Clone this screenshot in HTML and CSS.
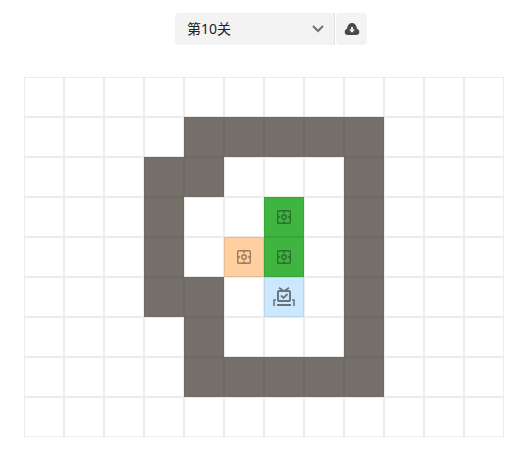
FILE: index.html
```html
<!DOCTYPE html>
<html lang="zh-CN">
<head>
<meta charset="utf-8">
<meta name="viewport" content="width=device-width, initial-scale=1">
<title>推箱子</title>
<link rel="stylesheet" href="styles.css">
</head>
<body>
<svg class="symbols" aria-hidden="true">
  <symbol id="box" viewBox="0 0 14 14">
    <g fill="none" stroke="currentColor" stroke-width="1.4">
      <rect x="0.7" y="0.7" width="12.6" height="12.6" rx="1"/>
      <circle cx="7" cy="7" r="2.2"/>
      <path d="M7 1v2.200M7 10.800V13M1 7h2.200M10.800 7H13"/>
    </g>
  </symbol>
  <symbol id="player" viewBox="0 0 22 20">
    <g fill="none" stroke="currentColor" stroke-width="2">
      <rect x="5" y="4" width="12" height="10" rx="1"/>
      <path d="M6 0.800 10 3.500M16 0.800 12 3.500M8 8.500l2.500 2.500L14.500 7" stroke-width="1.8"/>
      <path d="M3 13H1v6M19 13h2v6" stroke-width="1.600"/>
      <path d="M4 18h14"/>
    </g>
  </symbol>
</svg>
<main class="page">
  <div class="toolbar">
    <div class="picker">
      <select class="level" aria-label="关卡">
        <option>第10关</option>
      </select>
      <svg class="chevron" viewBox="0 0 12 8" aria-hidden="true"><path d="M1 1l5 5 5-5"/></svg>
    </div>
    <button class="download" type="button" aria-label="下载">
      <svg class="cloud" viewBox="0 0 16 12" aria-hidden="true">
        <path class="cloud-body" d="M4 12C1.700 12 .7 10.500 .7 8.900c0-1.600.9-2.800 2.400-3.200C3.300 2.500 5.200 0 8 0s4.700 2.500 4.900 5.700C14.400 6.100 15.300 7.300 15.300 8.900c0 1.600-1 3.100-3.300 3.100z"/>
        <path class="cloud-arrow" d="M7 4h2v2.500h2L8 9.700 5 6.500h2z"/>
      </svg>
    </button>
  </div>
  <div class="board" id="board"></div>
</main>
<script src="board.js"></script>
</body>
</html>
```
FILE: styles.css
```css
* {
  box-sizing: border-box;
}

body {
  margin: 0;
  background: #fff;
  color: #222;
  font-family: "Noto Sans", "Noto Sans CJK SC", sans-serif;
  font-size: 14px;
}

.symbols {
  display: none;
}

.page {
  padding: 13px 26px 16px 24px;
}

.toolbar {
  display: flex;
  justify-content: center;
  gap: 1px;
  margin-bottom: 32px;
  padding-left: 14px;
}

.picker {
  display: grid;
  align-items: center;
  width: 160px;
  border-right: 1px solid #e2e2e2;
  border-radius: 4px 0 0 4px;
  background: #f3f3f3;
}

.level,
.chevron {
  grid-area: 1 / 1;
}

.level {
  width: 100%;
  height: 32px;
  padding: 0 32px 2px 12px;
  border: 0;
  background: transparent;
  color: inherit;
  font: inherit;
  appearance: none;
}

.chevron {
  justify-self: end;
  width: 12px;
  height: 8px;
  margin-right: 10px;
  fill: none;
  stroke: #707070;
  stroke-width: 2;
  pointer-events: none;
}

.download {
  display: flex;
  align-items: center;
  justify-content: center;
  width: 31px;
  height: 32px;
  padding: 0;
  border: 0;
  border-radius: 4px;
  background: #f3f3f3;
}

.cloud {
  width: 16px;
  height: 12px;
}

.cloud-body {
  fill: #4c4848;
}

.cloud-arrow {
  fill: #f3f3f3;
}

.board {
  display: grid;
  grid-template-columns: repeat(12, 40px);
  grid-auto-rows: 40px;
  justify-content: center;
}

.cell {
  display: flex;
  align-items: center;
  justify-content: center;
  border: 1px solid #ebebeb;
}

.wall {
  border-color: #6f6863;
  background: #756f6a;
}

.crate {
  border-color: #e6bd93;
  background: #ffcf9f;
  color: #947b62;
}

.done {
  border-color: #3aa33a;
  background: #40b440;
  color: #2b6e2b;
}

.person {
  border-color: #bad3e6;
  background: #cce8ff;
  color: #68747e;
}

.box-icon {
  width: 14px;
  height: 14px;
}

.player-icon {
  width: 22px;
  height: 20px;
}
```
FILE: board.js
```js
// # wall, $ crate, * crate on its goal, @ player
const rows = [
  "            ",
  "    #####   ",
  "   ##   #   ",
  "   #  * #   ",
  "   # $* #   ",
  "   ## @ #   ",
  "    #   #   ",
  "    #####   ",
  "            "
];
const kinds = { "#": "wall", "$": "crate", "*": "done", "@": "person" };
const boxIcon = '<svg class="box-icon"><use href="#box"/></svg>';
const icons = {
  "$": boxIcon,
  "*": boxIcon,
  "@": '<svg class="player-icon"><use href="#player"/></svg>'
};
document.getElementById("board").innerHTML = [...rows.join("")]
  .map(c => `<div class="cell ${kinds[c] || "floor"}">${icons[c] || ""}</div>`)
  .join("");
```
